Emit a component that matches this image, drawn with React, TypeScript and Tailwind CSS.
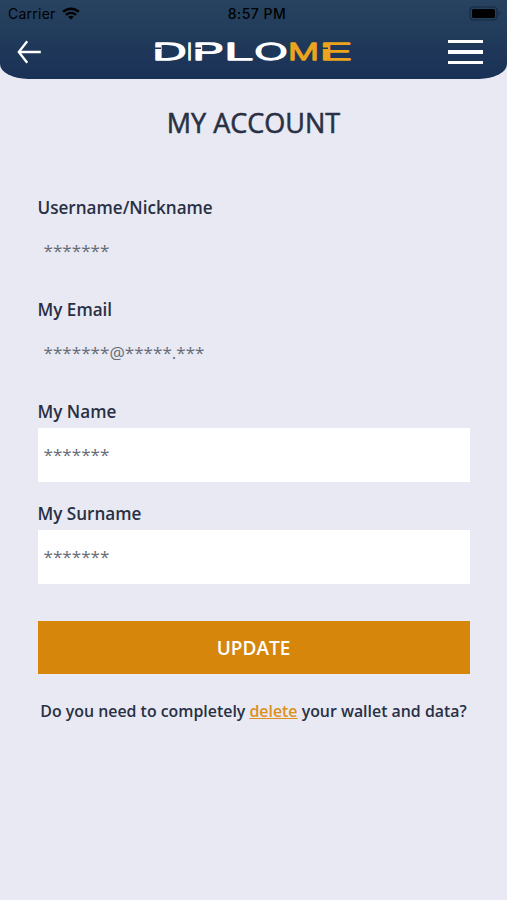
import type { ReactNode } from "react";

interface FieldProps {
  label: string;
  value: string;
  editable?: boolean;
}

// Each letter of the wordmark is stretched to its own width
const wordmark = [
  { char: "D", x: 2, width: 35, color: "#fff" },
  { char: "I", x: 37, width: 5, color: "#fff" },
  { char: "P", x: 42, width: 32, color: "#fff" },
  { char: "L", x: 74, width: 30, color: "#fff" },
  { char: "O", x: 104, width: 34, color: "#fff" },
  { char: "M", x: 138, width: 31, color: "#eca31d" },
  { char: "E", x: 169, width: 34, color: "#eca31d" },
];

function StatusBar() {
  return (
    <div className="flex h-7 items-center justify-between pl-2 pr-[6px] text-black">
      <div className="flex w-[160px] items-center gap-[7px]">
        <span className="text-[14px] leading-none tracking-[0.25px]">Carrier</span>
        <svg width="18" height="13" viewBox="0 0 18 13" className="-ml-px -mt-px" fill="none" stroke="currentColor" strokeWidth="2.5">
          <path d="M1.2 4.9C5.6.6 12.4.6 16.8 4.9" />
          <path d="M4 7.9c2.9-2.7 7.1-2.7 10 0" />
          <path d="M9 12.6 6.2 9.9c1.6-1.4 4-1.4 5.6 0z" fill="currentColor" stroke="none" />
        </svg>
      </div>
      <span className="pl-[5px] text-[14px] font-medium leading-none tracking-[0.5px]">8:57 PM</span>
      <div className="flex w-[160px] justify-end">
        <svg width="32" height="15" viewBox="0 0 32 15" className="-mt-[2px]">
          <rect x="1" y="1" width="27" height="13" rx="3.5" fill="none" stroke="#172b43" strokeWidth="1.2" />
          <rect x="3" y="3" width="23" height="9" rx="1.5" fill="#000" />
          <path d="M29.5 5.5c1.6.6 1.6 3.4 0 4z" fill="#172b43" />
        </svg>
      </div>
    </div>
  );
}

function Logo() {
  return (
    <svg width="208" height="30" viewBox="0 0 208 30" className="ml-1.5" fontFamily="Inter, sans-serif" fontSize="22.5" fontWeight="300">
      <text y="23.3" strokeWidth="1.3" strokeLinejoin="round">
        {wordmark.map((letter) => (
          <tspan
            key={letter.char}
            x={letter.x}
            textLength={letter.width}
            lengthAdjust="spacingAndGlyphs"
            fill={letter.color}
            stroke={letter.color}
          >
            {letter.char}
          </tspan>
        ))}
      </text>
      {/* stencil cuts in the stems */}
      <path d="M3 11.2h8M43 11.2h8M170 11.2h8" stroke="#1e3858" strokeWidth="1.5" />
    </svg>
  );
}

function Header() {
  return (
    <header className="h-[79px] bg-linear-to-b from-[#28435f] to-[#193156] [border-radius:0_0_28px_28px/0_0_15px_15px]">
      <StatusBar />
      <div className="flex h-12 items-center justify-between pl-[17px] pr-6">
        <svg width="36" height="24" viewBox="0 0 36 24" fill="none" stroke="#fff" strokeWidth="2.3">
          <path d="M10.2 1.2 1.8 12l8.4 10.8M1.8 12h22" />
        </svg>
        <Logo />
        <div className="flex w-[35px] flex-col gap-[7px]">
          <span className="h-[3.5px] bg-white" />
          <span className="h-[3.5px] bg-white" />
          <span className="h-[3.5px] bg-white" />
        </div>
      </div>
    </header>
  );
}

function Field({ label, value, editable = false }: FieldProps) {
  return (
    <div className="mb-[19px]">
      <div className="mb-[5px] h-6 text-[17.1px] font-semibold leading-[25px]">{label}</div>
      <div className={`flex h-[54px] items-center px-1.5 text-[17.1px] text-[#666b76] ${editable ? "bg-white" : ""}`}>
        {value}
      </div>
    </div>
  );
}

function Button({ children }: { children: ReactNode }) {
  return (
    <button className="mt-[18px] h-[53px] w-full bg-[#d6860b] pt-0.5 text-[19px] font-semibold text-white">
      {children}
    </button>
  );
}

export default function App() {
  return (
    <div className="h-[900px] w-[507px] overflow-hidden bg-[#e8e9f3] font-['Inter',sans-serif]">
      <Header />
      <main className="px-[37.5px] font-['Open_Sans','Noto_Sans',sans-serif] text-[#293044]">
        <h1 className="mt-[25px] h-9 text-center text-[27px] leading-[38px] [-webkit-text-stroke:0.55px_#293044]">
          MY ACCOUNT
        </h1>
        <div className="mt-[55px]">
          <Field label="Username/Nickname" value="*******" />
          <Field label="My Email" value="*******@*****.***" />
          <Field label="My Name" value="*******" editable />
          <Field label="My Surname" value="*******" editable />
        </div>
        <Button>UPDATE</Button>
        <p className="mt-[25px] whitespace-nowrap text-center text-[15.9px] font-semibold leading-6">
          Do you need to completely <a className="text-[#dd9020] underline">delete</a> your wallet and data?
        </p>
      </main>
    </div>
  );
}
